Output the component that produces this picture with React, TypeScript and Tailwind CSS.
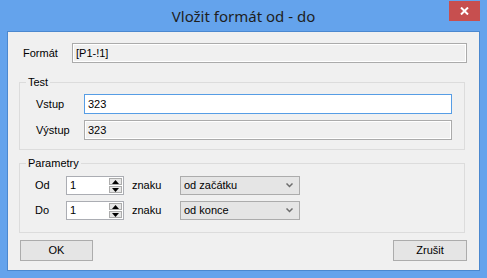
import React from "react";

const ui = { fontFamily: '"Liberation Sans", Arial, sans-serif' };

function SpinBox({ value }: { value: string }) {
  return (
    <div className="flex h-[19px] w-[58px] border border-[#abadb3] bg-white">
      <div className="flex-1 pl-[3px] text-[11px] leading-[17px] text-black">{value}</div>
      <div className="flex w-[15px] flex-col gap-[1px] p-[1px]">
        <div className="flex flex-1 items-center justify-center border border-[#acacac] bg-[#e6e6e6]">
          <svg width="7" height="4" viewBox="0 0 7 4">
            <path d="M0 4 L3.5 0 L7 4 Z" fill="#000" />
          </svg>
        </div>
        <div className="flex flex-1 items-center justify-center border border-[#acacac] bg-[#e6e6e6]">
          <svg width="7" height="4" viewBox="0 0 7 4">
            <path d="M0 0 L7 0 L3.5 4 Z" fill="#000" />
          </svg>
        </div>
      </div>
    </div>
  );
}

function Combo({ value }: { value: string }) {
  return (
    <div className="flex h-[19px] w-[120px] items-center justify-between border border-[#acacac] bg-[#e5e5e5] pl-[3px] pr-[6px]">
      <span className="text-[11px] leading-[17px] text-black">{value}</span>
      <svg width="7" height="5" viewBox="0 0 7 5">
        <path d="M0.5 0.5 L3.5 3.5 L6.5 0.5" stroke="#6d6d6d" strokeWidth="1.5" fill="none" />
      </svg>
    </div>
  );
}

function ReadBox({ value, w }: { value: string; w: string }) {
  return (
    <div className={`flex h-[20px] ${w} items-center border border-[#ababab] bg-[#f0f0f0]`}>
      <div className="flex h-full w-full items-center border border-white pl-[2px] text-[11px] text-black">
        {value}
      </div>
    </div>
  );
}

export default function App() {
  return (
    <div
      className="flex h-[278px] w-[487px] flex-col bg-[#64a3ec]"
      style={ui}
    >
      <div className="relative flex h-[31px] items-center justify-center">
        <span
          className="text-[15px] leading-none text-[#1e1e1e] pt-[2px]"
          style={{ fontFamily: '"Noto Sans", "Open Sans", sans-serif' }}
        >
          Vložit formát od - do
        </span>
        <div className="absolute right-[7px] top-[1px] flex h-[20px] w-[31px] items-center justify-center bg-[#c74f4f]">
          <svg width="9" height="8" viewBox="0 0 9 8">
            <path d="M1 0.5 L8 7.5 M8 0.5 L1 7.5" stroke="#fff" strokeWidth="2" />
          </svg>
        </div>
      </div>
      <div className="ml-[7px] flex h-[240px] w-[473px] flex-col border border-[#4b88cf] bg-[#f0f0f0] text-[11px] text-black">
        <div className="flex items-center pl-[15px] pt-[11px]">
          <span className="w-[49px]">Formát</span>
          <ReadBox value="[P1-!1]" w="w-[395px]" />
        </div>

        <fieldset className="ml-[11px] mt-[12px] w-[446px] border border-[#dcdcdc] pb-[9px] pt-[5px]">
          <legend className="ml-[6px] px-[2px] leading-[14px]">Test</legend>
          <div className="flex flex-col gap-[6px] pl-[16px]">
            <div className="flex items-center">
              <span className="w-[48px]">Vstup</span>
              <div className="flex h-[20px] w-[368px] items-center border border-[#569de5] bg-white pl-[3px]">
                323
              </div>
            </div>
            <div className="flex items-center">
              <span className="w-[48px]">Výstup</span>
              <ReadBox value="323" w="w-[368px]" />
            </div>
          </div>
        </fieldset>

        <fieldset className="ml-[11px] mt-[6px] w-[446px] border border-[#dcdcdc] pb-[12px] pt-[6px]">
          <legend className="ml-[6px] px-[2px] leading-[14px]">Parametry</legend>
          <div className="flex flex-col gap-[6px] pl-[15px]">
            <div className="flex items-center">
              <span className="w-[31px]">Od</span>
              <SpinBox value="1" />
              <span className="ml-[8px] w-[48px]">znaku</span>
              <Combo value="od začátku" />
            </div>
            <div className="flex items-center">
              <span className="w-[31px]">Do</span>
              <SpinBox value="1" />
              <span className="ml-[8px] w-[48px]">znaku</span>
              <Combo value="od konce" />
            </div>
          </div>
        </fieldset>

        <div className="mt-[7px] flex justify-between pl-[12px] pr-[12px]">
          <button className="h-[21px] w-[73px] border border-[#acacac] bg-[#e5e5e5] text-[11px] text-black">
            OK
          </button>
          <button className="h-[21px] w-[74px] border border-[#acacac] bg-[#e5e5e5] text-[11px] text-black">
            Zrušit
          </button>
        </div>
      </div>
    </div>
  );
}
